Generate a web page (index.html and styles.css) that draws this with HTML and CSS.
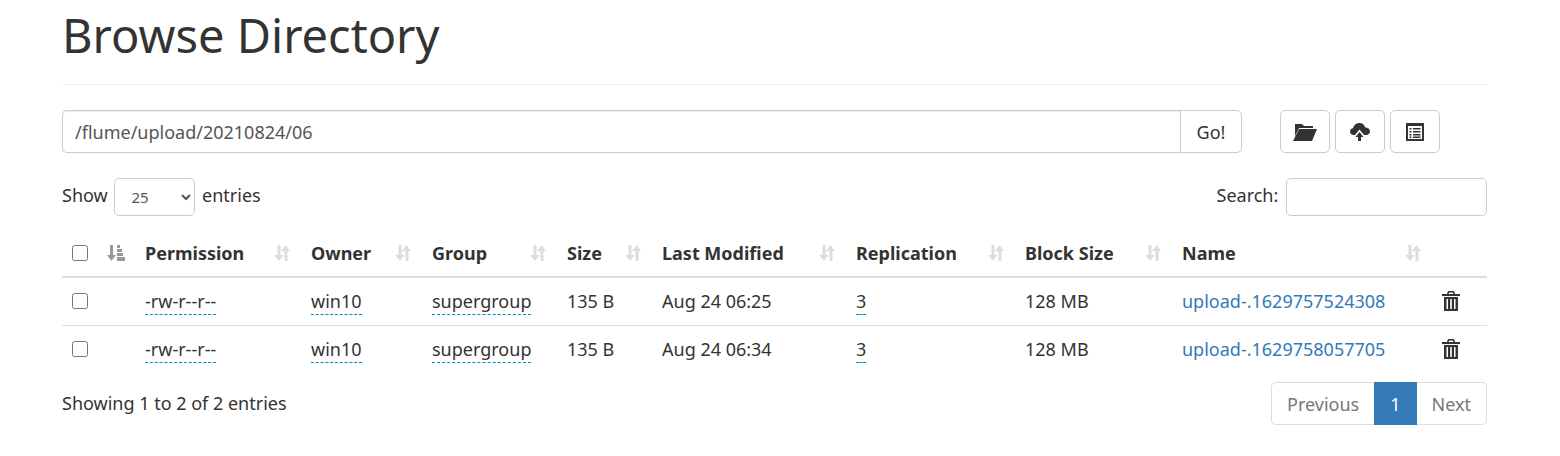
FILE: index.html
```html
<!DOCTYPE html>
<html lang="en">
<head>
  <meta charset="UTF-8" />
  <title>Browse Directory</title>
  <link rel="stylesheet" href="styles.css">
</head>
<body>
  <svg class="sprites" width="0" height="0">
    <symbol id="i-sort" viewBox="0 0 18 18">
      <path d="M5 1h3v10h3l-4.500 6L2 11h3zM13 1l4.500 6H15v10h-3V7H8.500z" transform="translate(-.5 0)"/>
    </symbol>
    <symbol id="i-sort-attr" viewBox="0 0 18 18">
      <path d="M3 1h3v10h3l-4.500 6L0 11h3zM10 1h3v3h-3zM10 5h5v3h-5zM10 9h6v3h-6zM10 13h8v4h-8z"/>
    </symbol>
    <symbol id="i-folder" viewBox="0 0 24 18">
      <path d="M2 1h7l2 2h9v2H6L2 13zM6 6h18l-5 12H0z"/>
    </symbol>
    <symbol id="i-upload" viewBox="0 0 20 18">
      <path d="M9.500 0c3 0 5 1.800 5.500 4.200C17.800 4.400 20 6 20 8.500c0 2.300-1.800 3.500-3.800 3.500H14L9.500 6.500 5 12H3.500C1.500 12 0 10.500 0 8.600 0 6.800 1.300 5.500 3 5.300 3.700 2.200 6.300 0 9.500 0zM9.500 9l4 5H11v4H8v-4H5.500z"/>
    </symbol>
    <symbol id="i-list" viewBox="0 0 18 18">
      <path fill-rule="evenodd" d="M0 0h18v18H0zM2 3v13h14V3zM3.500 5h2v1.500h-2zM7 5h7.500v1.500H7zM3.500 8h2v1.500h-2zM7 8h7.500v1.500H7zM3.500 11h2v1.500h-2zM7 11h7.500v1.500H7zM3.500 13.500h2V15h-2zM7 13.500h7.500V15H7z"/>
    </symbol>
    <symbol id="i-trash" viewBox="0 0 18 20">
      <path fill-rule="evenodd" d="M6 0h6l1 3h5v2H0V3h5zM7 1.500L6.600 3h4.800L11 1.500zM2 6h14v14H2zM4.500 8v10H6V8zM8.200 8v10h1.600V8zM12 8v10h1.500V8z"/>
    </symbol>
  </svg>

  <div class="container">
    <h1 class="page-title">Browse Directory</h1>

    <div class="toolbar">
      <div class="path-group">
        <input type="text" class="path-input" value="/flume/upload/20210824/06" />
        <button class="go-btn">Go!</button>
      </div>
      <div class="actions">
        <button class="icon-btn"><svg class="icon-folder"><use href="#i-folder"/></svg></button>
        <button class="icon-btn"><svg class="icon-upload"><use href="#i-upload"/></svg></button>
        <button class="icon-btn"><svg class="icon-list"><use href="#i-list"/></svg></button>
      </div>
    </div>

    <div class="table-controls">
      <label class="length-label">Show
        <select class="length-select"><option>25</option></select>
        entries</label>
      <label class="search-label">Search: <input type="search" class="search-input" /></label>
    </div>

    <table class="files">
      <colgroup>
        <col class="c-check"><col class="c-blank"><col class="c-perm"><col class="c-owner"><col class="c-group">
        <col class="c-size"><col class="c-date"><col class="c-repl"><col class="c-block"><col class="c-name"><col class="c-del">
      </colgroup>
      <thead>
        <tr>
          <th><input type="checkbox" class="check" /></th>
          <th><svg class="sort sort-active"><use href="#i-sort-attr"/></svg></th>
          <th><div class="th-inner">Permission<svg class="sort"><use href="#i-sort"/></svg></div></th>
          <th><div class="th-inner">Owner<svg class="sort"><use href="#i-sort"/></svg></div></th>
          <th><div class="th-inner">Group<svg class="sort"><use href="#i-sort"/></svg></div></th>
          <th><div class="th-inner">Size<svg class="sort"><use href="#i-sort"/></svg></div></th>
          <th><div class="th-inner">Last Modified<svg class="sort"><use href="#i-sort"/></svg></div></th>
          <th><div class="th-inner">Replication<svg class="sort"><use href="#i-sort"/></svg></div></th>
          <th><div class="th-inner">Block Size<svg class="sort"><use href="#i-sort"/></svg></div></th>
          <th><div class="th-inner">Name<svg class="sort"><use href="#i-sort"/></svg></div></th>
          <th></th>
        </tr>
      </thead>
      <tbody>
        <tr>
          <td><input type="checkbox" class="check" /></td>
          <td></td>
          <td><span class="editable">-rw-r--r--</span></td>
          <td><span class="editable">win10</span></td>
          <td><span class="editable">supergroup</span></td>
          <td>135 B</td>
          <td>Aug 24 06:25</td>
          <td><span class="editable">3</span></td>
          <td>128 MB</td>
          <td><a href="#" class="file-link">upload-.1629757524308</a></td>
          <td><svg class="icon-trash"><use href="#i-trash"/></svg></td>
        </tr>
        <tr>
          <td><input type="checkbox" class="check" /></td>
          <td></td>
          <td><span class="editable">-rw-r--r--</span></td>
          <td><span class="editable">win10</span></td>
          <td><span class="editable">supergroup</span></td>
          <td>135 B</td>
          <td>Aug 24 06:34</td>
          <td><span class="editable">3</span></td>
          <td>128 MB</td>
          <td><a href="#" class="file-link">upload-.1629758057705</a></td>
          <td><svg class="icon-trash"><use href="#i-trash"/></svg></td>
        </tr>
      </tbody>
    </table>

    <div class="table-footer">
      <div class="info">Showing 1 to 2 of 2 entries</div>
      <div class="pagination">
        <a href="#" class="page-item first">Previous</a>
        <a href="#" class="page-item current">1</a>
        <a href="#" class="page-item last">Next</a>
      </div>
    </div>
  </div>
</body>
</html>
```

FILE: styles.css
```css
* {
  box-sizing: border-box;
}
body {
  margin: 0;
  font-family: "Noto Sans", "Open Sans", sans-serif;
  font-size: 18px;
  color: #333;
  background: #fff;
}
.sprites {
  position: absolute;
}
.container {
  width: 1425px;
  margin-left: 62px;
}

.page-title {
  margin: 0;
  height: 85px;
  padding-top: 2px;
  font-size: 47px;
  font-weight: 400;
  line-height: 66px;
  border-bottom: 1px solid #eee;
}

.toolbar {
  display: flex;
  margin-top: 25px;
}
.path-group {
  display: flex;
  width: 1180px;
  height: 43px;
}
.path-input {
  flex: 1;
  padding: 0 12px;
  font: inherit;
  color: #555;
  border: 1px solid #ccc;
  border-right: 0;
  border-radius: 5px 0 0 5px;
  box-shadow: inset 0 1px 1px rgba(0, 0, 0, 0.075);
}
.go-btn {
  width: 62px;
  font: inherit;
  color: #333;
  background: #fff;
  border: 1px solid #ccc;
  border-radius: 0 5px 5px 0;
}
.actions {
  display: flex;
  gap: 5px;
  margin-left: 38px;
}
.icon-btn {
  display: flex;
  justify-content: center;
  align-items: center;
  width: 50px;
  height: 43px;
  padding: 0;
  background: #fff;
  border: 1px solid #ccc;
  border-radius: 5px;
}
.icon-btn svg {
  fill: #333;
}
.icon-folder {
  width: 24px;
  height: 18px;
}
.icon-upload {
  width: 20px;
  height: 18px;
}
.icon-list {
  width: 18px;
  height: 18px;
}

.table-controls {
  display: flex;
  justify-content: space-between;
  align-items: center;
  margin-top: 25px;
  height: 38px;
}
.length-select {
  width: 81px;
  height: 38px;
  margin: 0 2px;
  padding: 0 12px;
  font: inherit;
  font-size: 15px;
  color: #555;
  background: #fff;
  border: 1px solid #ccc;
  border-radius: 5px;
  vertical-align: middle;
}
.search-input {
  width: 201px;
  height: 38px;
  margin-left: 3px;
  border: 1px solid #ccc;
  border-radius: 5px;
  vertical-align: middle;
}

.files {
  width: 100%;
  margin-top: 13px;
  border-collapse: collapse;
  table-layout: fixed;
}
.c-check { width: 35px; }
.c-blank { width: 38px; }
.c-perm { width: 166px; }
.c-owner { width: 121px; }
.c-group { width: 135px; }
.c-size { width: 95px; }
.c-date { width: 194px; }
.c-repl { width: 169px; }
.c-block { width: 157px; }
.c-name { width: 260px; }
.c-del { width: 55px; }

.files th {
  height: 48px;
  padding: 0 10px;
  text-align: left;
  font-weight: 700;
  border-bottom: 2px solid #ddd;
}
.files td {
  height: 48px;
  padding: 0 10px;
  border-bottom: 1px solid #ddd;
}
.files tbody tr:last-child td {
  border-bottom: 0;
}
.th-inner {
  display: flex;
  justify-content: space-between;
  align-items: center;
}
.sort {
  width: 18px;
  height: 18px;
  fill: #ddd;
  flex: none;
}
.sort-active {
  fill: #999;
  display: block;
}
.check {
  display: block;
  width: 16px;
  height: 16px;
  margin: 0;
}
.editable {
  border-bottom: 1px dashed #08c;
  padding-bottom: 1px;
}
.file-link {
  color: #337ab7;
  text-decoration: none;
}
.icon-trash {
  display: block;
  width: 18px;
  height: 20px;
  fill: #333;
}

.table-footer {
  display: flex;
  justify-content: space-between;
  align-items: flex-start;
  margin-top: 9px;
}
.info {
  padding-top: 9px;
}
.pagination {
  display: flex;
  height: 43px;
}
.page-item {
  display: flex;
  align-items: center;
  padding: 0 15px;
  color: #777;
  text-decoration: none;
  border: 1px solid #ddd;
}
.page-item.first {
  border-right: 0;
  border-radius: 5px 0 0 5px;
}
.page-item.last {
  border-left: 0;
  border-radius: 0 5px 5px 0;
}
.page-item.current {
  color: #fff;
  background: #337ab7;
  border-color: #337ab7;
}
```
